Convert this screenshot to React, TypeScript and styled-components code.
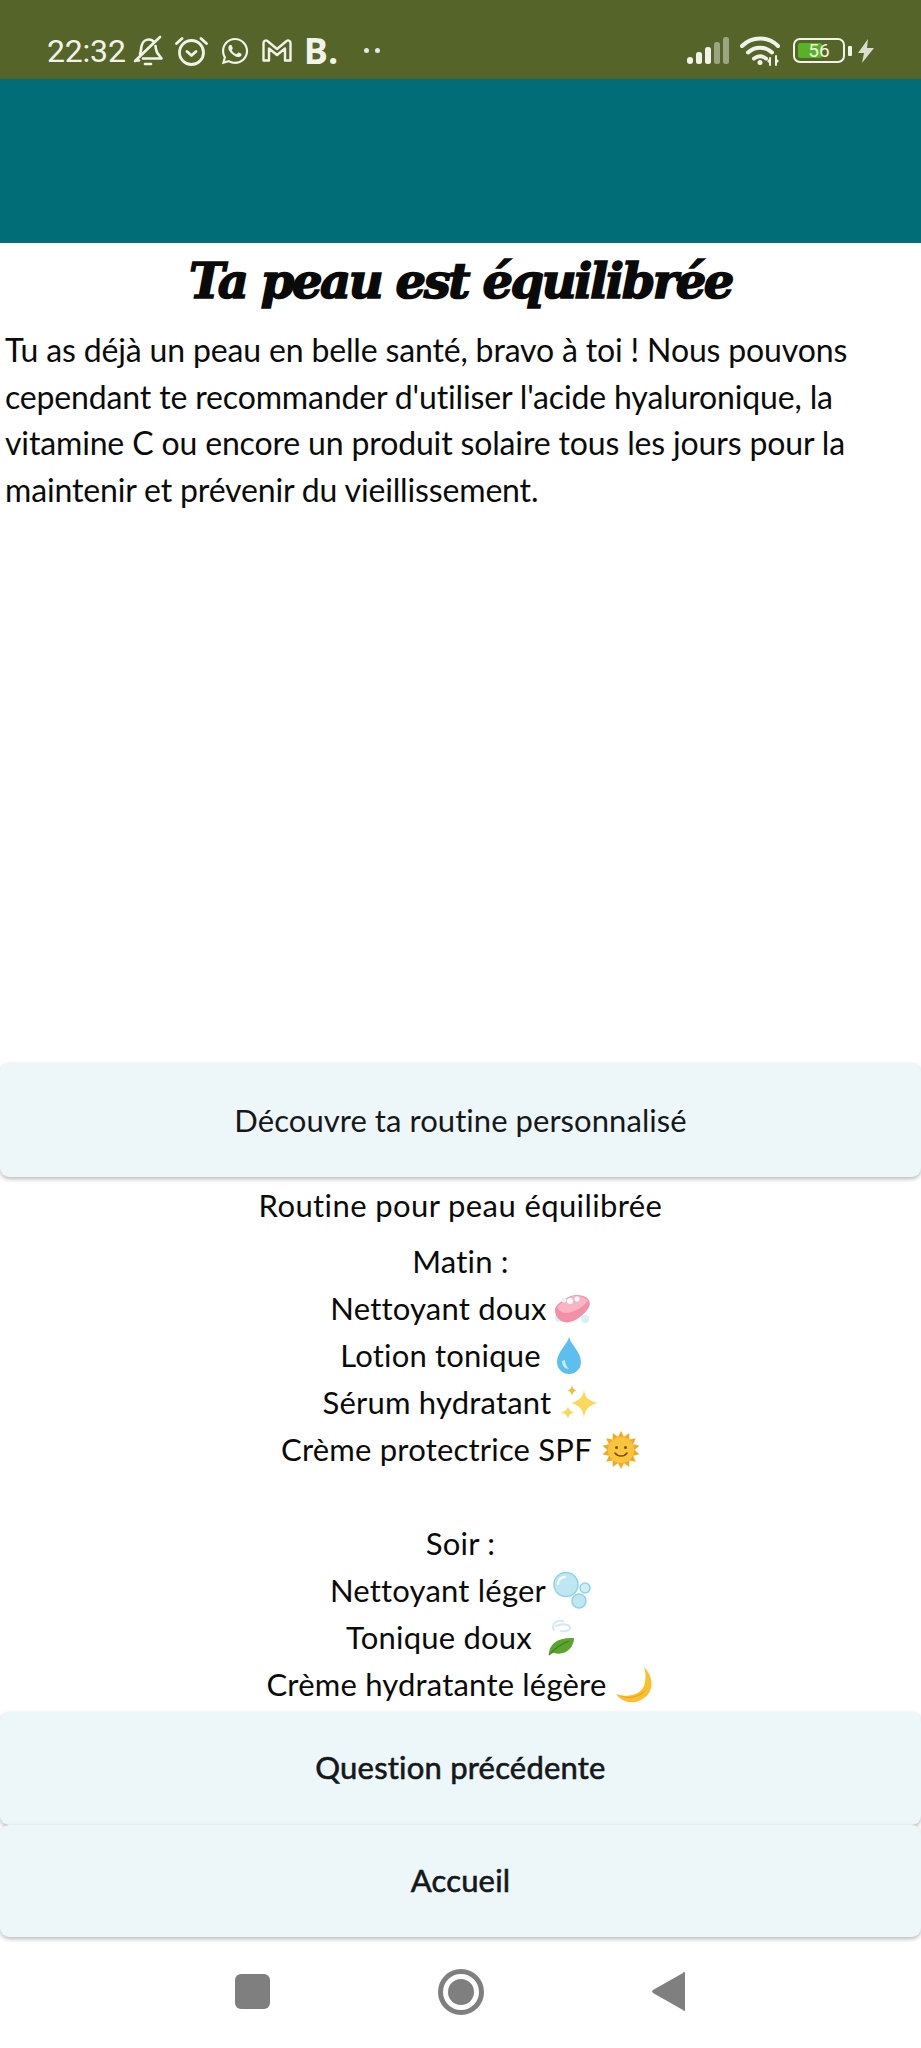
import React from "react";
import styled, { createGlobalStyle } from "styled-components";
import { FaWhatsapp } from "react-icons/fa";

const GlobalStyle = createGlobalStyle`
  html, body {
    margin: 0;
    padding: 0;
    background: #ffffff;
  }
  * {
    box-sizing: border-box;
  }
`;

const Page = styled.div`
  display: flex;
  flex-direction: column;
  width: 921px;
  height: 2048px;
  overflow: hidden;
  background: #ffffff;
  color: #0b0b0b;
  font-family: Lato, "Liberation Sans", sans-serif;
`;

const StatusBar = styled.div`
  display: flex;
  align-items: center;
  justify-content: space-between;
  height: 79px;
  padding: 22px 47px 0 47px;
  background: #55652a;
  color: #f1f3ea;
`;

const StatusGroup = styled.div<{ $gap: number }>`
  display: flex;
  align-items: center;
  gap: ${(p) => p.$gap}px;
`;

const Time = styled.span`
  margin-right: -5px;
  font-family: Roboto, sans-serif;
  font-size: 32px;
  letter-spacing: -0.2px;
`;

const BoldB = styled.span`
  font-family: "Open Sans", sans-serif;
  font-size: 36px;
  line-height: 34px;
  font-weight: 700;
`;

const Dots = styled.span`
  display: flex;
  gap: 6px;
  margin-left: 14px;
`;

const Dot = styled.i`
  width: 5px;
  height: 5px;
  border-radius: 50%;
  background: #e5e8dc;
`;

const Battery = styled.div`
  position: relative;
  width: 52px;
  height: 25px;
  padding: 3px;
  border: 2.5px solid #f1f3ea;
  border-radius: 7px;
  overflow: hidden;
`;

const BatteryFill = styled.div`
  height: 100%;
  border-radius: 2px;
  background: #58b227;
`;

const BatteryLabel = styled.span`
  position: absolute;
  inset: 0;
  display: flex;
  align-items: center;
  justify-content: center;
  font-family: Roboto, sans-serif;
  font-size: 19px;
  color: #f1f7df;
`;

const BatteryTip = styled.i`
  width: 4px;
  height: 10px;
  margin: 0 -5px 0 -8px;
  border-radius: 1px;
  background: #f1f3ea;
`;

const Banner = styled.div`
  height: 164px;
  background: #006d77;
`;

const Title = styled.h1`
  margin: 13px 0 0;
  height: 51px;
  font-family: "DejaVu Serif", serif;
  font-size: 48px;
  line-height: 51px;
  font-weight: 700;
  font-style: italic;
  letter-spacing: -2.4px;
  text-align: center;
  color: #0a0a0a;
  -webkit-text-stroke: 1.6px #0a0a0a;
`;

const Paragraph = styled.p`
  margin: 20px 0 0;
  padding: 0 0 0 5px;
  font-size: 32px;
  line-height: 46.7px;
  font-weight: 400;
  letter-spacing: -0.15px;
  white-space: nowrap;
`;

const Spacer = styled.div`
  flex: 1;
`;

const ActionButton = styled.div<{ $height: number; $medium?: boolean; $lift?: number }>`
  position: relative;
  display: flex;
  align-items: center;
  justify-content: center;
  width: 100%;
  height: ${(p) => p.$height}px;
  padding-bottom: ${(p) => p.$lift ?? 0}px;
  border-radius: 9px;
  background: #edf6f9;
  box-shadow: 0 2px 4px rgba(0, 0, 0, 0.28);
  font-size: 31px;
  letter-spacing: ${(p) => (p.$medium ? 0.2 : 0.05)}px;
  color: #14181a;
  -webkit-text-stroke: ${(p) => (p.$medium ? 0.6 : 0)}px #14181a;
`;

const RoutineName = styled.div`
  margin-top: 8px;
  height: 40px;
  font-size: 31px;
  line-height: 40px;
  letter-spacing: 0.4px;
  text-align: center;
`;

const RoutineList = styled.div`
  margin-top: 13px;
  margin-bottom: 4px;
  display: flex;
  flex-direction: column;
  align-items: center;
`;

const RoutineLine = styled.div<{ $gap?: number }>`
  display: flex;
  align-items: center;
  justify-content: center;
  gap: ${(p) => p.$gap ?? 10}px;
  height: 47px;
  font-size: 31px;
  line-height: 47px;
  letter-spacing: 0.2px;
  white-space: nowrap;
`;

const Emoji = styled.svg`
  display: block;
  flex: none;
`;

const NavBar = styled.div`
  display: flex;
  align-items: center;
  height: 111px;
  padding: 0 0 2px 235px;
  background: #ffffff;
`;

const NavSquare = styled.div`
  width: 35px;
  height: 35px;
  border-radius: 6px;
  background: #7f7f7f;
`;

const NavHome = styled.div`
  display: flex;
  align-items: center;
  justify-content: center;
  width: 46px;
  height: 46px;
  margin-left: 168px;
  border: 5px solid #7f7f7f;
  border-radius: 50%;
`;

const NavHomeDot = styled.div`
  width: 26px;
  height: 26px;
  border-radius: 50%;
  background: #7f7f7f;
`;

const NavBack = styled.svg`
  display: block;
  margin-left: 168px;
`;

const BellOffIcon = () => (
  <svg width="30" height="32" viewBox="0 0 30 32" fill="none" stroke="currentColor" strokeWidth="2.6" strokeLinejoin="round" strokeLinecap="round">
    <path d="M7 19c1-2 1-5 1.500-8C9.500 6.500 13 4.500 16 4.500c2 0 3.500.8 4.800 2" />
    <path d="M22.500 11c.3 3 .6 6 3 8.500l3 4H10" />
    <path d="M3 25.500h3" />
    <path d="M2 26 27 2" />
    <path d="M12 29h6" />
  </svg>
);

const AlarmIcon = () => (
  <svg width="33" height="32" viewBox="0 0 33 32" fill="none" stroke="currentColor" strokeWidth="2.8" strokeLinecap="round" strokeLinejoin="round">
    <circle cx="16.500" cy="17.500" r="12" />
    <path d="M1.500 8.500 7 3.500" />
    <path d="M31.500 8.500 26 3.500" />
    <path d="M12 16.500l4.500 4 4.500-4" />
  </svg>
);

const GmailIcon = () => (
  <svg width="30" height="23" viewBox="0 0 30 23" fill="none" stroke="currentColor" strokeWidth="2.4" strokeLinejoin="round">
    <path d="M1.500 21.500V4c0-2.500 3-3.500 4.500-1.500L15 10l9-7.500c1.500-2 4.500-1 4.500 1.500v17.500h-5.500V9.500L15 16 7 9.500v12z" />
  </svg>
);

const SignalIcon = () => (
  <svg width="42" height="28" viewBox="0 0 42 28" fill="currentColor">
    <rect x="0" y="20" width="6" height="7" rx="3" />
    <rect x="9" y="15" width="6" height="12" rx="2.500" />
    <rect x="18" y="10" width="6" height="17" rx="2.500" />
    <rect x="27" y="5" width="6" height="22" rx="2.500" opacity="0.45" />
    <rect x="36" y="0" width="6" height="27" rx="2.500" opacity="0.45" />
  </svg>
);

const WifiIcon = () => (
  <svg width="42" height="30" viewBox="0 0 42 30" fill="none" stroke="currentColor" strokeWidth="4" strokeLinecap="round">
    <path d="M2 10C12 0 28 0 38 10" />
    <path d="M8 16.500c7-6.500 17-6.500 24 0" />
    <path d="M14 22.500c4-3 8-3 12 0" />
    <circle cx="20" cy="26.500" r="2.500" fill="currentColor" stroke="none" />
    <path d="M30 22v7M36 20v9" strokeWidth="2" />
    <path d="M27 25l3-3v6zM39 25l-3 3v-6z" fill="currentColor" stroke="none" />
  </svg>
);

const BoltIcon = () => (
  <svg width="16" height="24" viewBox="0 0 16 24" fill="#d9ddcb">
    <path d="M10 0 0 14h6l-2 10 12-15H9z" />
  </svg>
);

const SoapEmoji = () => (
  <Emoji width="38" height="32" viewBox="0 0 38 32">
    <circle cx="6" cy="25" r="4" fill="#d8eff7" />
    <circle cx="32" cy="26" r="4" fill="#d8eff7" />
    <path d="M2 17 C2 13 6 10 12 6 C18 2 24 1 30 3 C36 5 38 9 36 14 C33 20 25 27 17 29 C10 31 2 26 2 17z" fill="#f48fa8" />
    <path d="M4 14 C8 10 14 5 20 3 C26 2 32 4 35 8 C30 14 22 19 14 20 C9 20 6 18 4 14z" fill="#f9b4c4" />
    <circle cx="17" cy="8" r="3" fill="#ffffff" />
    <circle cx="24" cy="6" r="2.500" fill="#ffffff" />
    <circle cx="11" cy="7" r="2.500" fill="#e3f4fa" />
  </Emoji>
);

const DropEmoji = () => (
  <Emoji width="24" height="37" viewBox="0 0 24 37">
    <path d="M12 0C10 8 0 15 0 25a12 12 0 0 0 24 0C24 15 14 8 12 0z" fill="#5cbff0" />
    <path d="M5 24c0 5 3 8 7 8-2-2-4-5-4-9z" fill="#c4ebfb" />
  </Emoji>
);

const SparklesEmoji = () => (
  <Emoji width="37" height="35" viewBox="0 0 37 35">
    <path d="M23 5c1 7 4 11 14 13-9 2-13 6-14 15-1-9-5-13-13-15 8-2 12-6 13-13z" fill="#fbd85c" />
    <path d="M11 0c.5 3 1.500 4.500 4.500 5.500-3 1-4 2.500-4.500 5.500-.5-3-1.500-4.500-4.500-5.500 3-1 4-2.500 4.500-5.500z" fill="#f6b93b" />
    <path d="M7 21c.5 3.500 2 5 6 6.500-4 1-5.500 3-6 7-.5-4-2-6-7-7 5-1.500 6.500-3 7-6.500z" fill="#fbd85c" />
  </Emoji>
);

const SunEmoji = () => {
  const rays = Array.from({ length: 14 }, (_, i) => (i * 360) / 14);
  return (
    <Emoji width="38" height="38" viewBox="0 0 38 38">
      {rays.map((angle) => (
        <path key={angle} d="M19 0l4 8h-8z" fill="#f6a821" transform={`rotate(${angle} 19 19)`} />
      ))}
      <circle cx="19" cy="19" r="13" fill="#f9c53d" />
      <circle cx="14.500" cy="16.500" r="1.500" fill="#7a4a10" />
      <circle cx="23.500" cy="16.500" r="1.500" fill="#7a4a10" />
      <path d="M13 22c3 4 9 4 12 0" fill="none" stroke="#7a4a10" strokeWidth="1.500" strokeLinecap="round" />
    </Emoji>
  );
};

const BubblesEmoji = () => (
  <Emoji width="38" height="37" viewBox="0 0 38 37">
    <circle cx="13" cy="12.500" r="12" fill="#bfe7f3" stroke="#8fd3e8" strokeWidth="1.500" />
    <path d="M5 12c0-4 3-7 7-7" fill="none" stroke="#ffffff" strokeWidth="2" strokeLinecap="round" />
    <circle cx="32" cy="16" r="5" fill="#cfeef6" stroke="#8fd3e8" strokeWidth="1.500" />
    <circle cx="26" cy="29" r="7" fill="#bfe7f3" stroke="#8fd3e8" strokeWidth="1.500" />
  </Emoji>
);

const LeafEmoji = () => (
  <Emoji width="27" height="36" viewBox="0 0 27 36">
    <path d="M6 10C3 4 8 0 15 1M8 6c6-3 12-2 14 1 1 3-4 5-9 4" fill="none" stroke="#d3e9f5" strokeWidth="2" strokeLinecap="round" />
    <path d="M1 34C1 24 10 17 26 18 26 28 17 36 6 33z" fill="#5aa52e" />
    <path d="M1 35C6 29 13 24 21 21" fill="none" stroke="#3d7d1d" strokeWidth="1.200" />
  </Emoji>
);

const MoonEmoji = () => (
  <Emoji width="38" height="36" viewBox="0 0 38 36">
    <path d="M28 0c10 10 10 24 0 31C19 38 6 36 0 27c12 4 24 1 28-8 2-6 2-13 0-19z" fill="#fbc02d" />
    <path d="M2 28c12 4 22 1 28-6-3 8-18 12-28 6z" fill="#f49f1c" />
  </Emoji>
);

const App: React.FC = () => {
  return (
    <Page>
      <GlobalStyle />
      <StatusBar>
        <StatusGroup $gap={12}>
          <Time>22:32</Time>
          <BellOffIcon />
          <AlarmIcon />
          <FaWhatsapp size={30} />
          <GmailIcon />
          <BoldB>B.</BoldB>
          <Dots>
            <Dot />
            <Dot />
          </Dots>
        </StatusGroup>
        <StatusGroup $gap={11}>
          <SignalIcon />
          <WifiIcon />
          <Battery>
            <BatteryFill style={{ width: "56%" }} />
            <BatteryLabel>56</BatteryLabel>
          </Battery>
          <BatteryTip />
          <BoltIcon />
        </StatusGroup>
      </StatusBar>
      <Banner />
      <Title>Ta peau est équilibrée</Title>
      <Paragraph>
        Tu as déjà un peau en belle santé, bravo à toi ! Nous pouvons
        <br />
        cependant te recommander d'utiliser l'acide hyaluronique, la
        <br />
        vitamine C ou encore un produit solaire tous les jours pour la
        <br />
        maintenir et prévenir du vieillissement.
      </Paragraph>
      <Spacer />
      <ActionButton $height={114}>Découvre ta routine personnalisé</ActionButton>
      <RoutineName>Routine pour peau équilibrée</RoutineName>
      <RoutineList>
        <RoutineLine>Matin :</RoutineLine>
        <RoutineLine $gap={6}>Nettoyant doux <SoapEmoji /></RoutineLine>
        <RoutineLine $gap={16}>Lotion tonique <DropEmoji /></RoutineLine>
        <RoutineLine>Sérum hydratant <SparklesEmoji /></RoutineLine>
        <RoutineLine>Crème protectrice SPF <SunEmoji /></RoutineLine>
        <RoutineLine />
        <RoutineLine>Soir :</RoutineLine>
        <RoutineLine $gap={7}>Nettoyant léger <BubblesEmoji /></RoutineLine>
        <RoutineLine $gap={16}>Tonique doux <LeafEmoji /></RoutineLine>
        <RoutineLine>Crème hydratante légère <MoonEmoji /></RoutineLine>
      </RoutineList>
      <ActionButton $height={113} $medium $lift={4}>Question précédente</ActionButton>
      <ActionButton $height={112} $medium $lift={2}>Accueil</ActionButton>
      <NavBar>
        <NavSquare />
        <NavHome>
          <NavHomeDot />
        </NavHome>
        <NavBack width="33" height="39" viewBox="0 0 33 39">
          <path d="M33 1v37a1 1 0 0 1-2 0L1 21a2 2 0 0 1 0-3L31 1a1 1 0 0 1 2 0z" fill="#7f7f7f" />
        </NavBack>
      </NavBar>
    </Page>
  );
};

export default App;
